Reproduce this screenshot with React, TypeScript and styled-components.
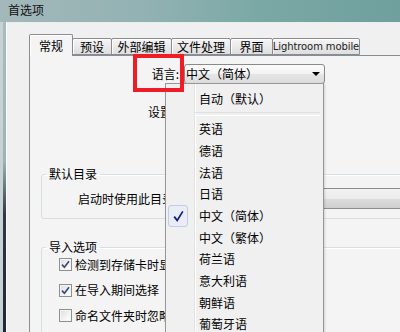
import React from "react";
import styled, { createGlobalStyle } from "styled-components";

const Global = createGlobalStyle`
  html, body { margin: 0; padding: 0; }
  body {
    width: 400px; height: 332px; overflow: hidden; background: #f0f0f0;
    font-family: "Noto Sans CJK SC", "Noto Sans", sans-serif;
    font-size: 12px; color: #000;
  }
  * { box-sizing: border-box; }
`;

const Window = styled.div`
  position: relative;
  width: 400px;
  height: 332px;
  overflow: hidden;
  display: flex;
  flex-direction: column;
  background: #f0f0f0;
`;

const TitleBar = styled.div`
  height: 22px;
  flex: none;
  padding: 2px 0 0 8px;
  background: linear-gradient(to right, #a3b8ba 0%, #93b2b3 35%, #7aa8a5 65%, #6fa09d 100%);
  font-size: 12px;
  line-height: 15px;
  color: #111;
`;

const Body = styled.div`
  flex: 1;
  display: flex;
  min-height: 0;
`;

const LeftFrame = styled.div`
  width: 6px;
  flex: none;
  background:
    linear-gradient(to right, #c8d2d4 0 3px, transparent 3px),
    linear-gradient(to bottom, #a6bdbd 0%, #9fb3b5 45%, #2c3a46 62%, #1d2935 100%);
`;

const Client = styled.div`
  flex: 1;
  min-width: 0;
  overflow: hidden;
  padding: 11px 0 0 22px;
  border-top: 1px solid #e9eef0;
  border-left: 1px solid #fbfbfb;
  display: flex;
  flex-direction: column;
`;

const TabStrip = styled.div`
  display: flex;
  align-items: flex-end;
  height: 21px;
  flex: none;
`;

const Tab = styled.div<{ $w: number; $active?: boolean }>`
  position: relative;
  width: ${(p) => p.$w}px;
  height: ${(p) => (p.$active ? 22 : 17)}px;
  margin-left: ${(p) => (p.$active ? 0 : -1)}px;
  margin-bottom: ${(p) => (p.$active ? -1 : 0)}px;
  z-index: ${(p) => (p.$active ? 2 : 1)};
  border: 1px solid #898c95;
  border-bottom: ${(p) => (p.$active ? "none" : "1px solid #898c95")};
  border-radius: 2px 2px 0 0;
  background: ${(p) =>
    p.$active ? "#f4f4f4" : "linear-gradient(#f5f5f5 0%, #ebebeb 45%, #dedede 100%)"};
  box-shadow: inset 1px 1px 0 #ffffff;
  display: flex;
  align-items: center;
  justify-content: center;
  font-size: 12px;
  line-height: 14px;
  padding-top: ${(p) => (p.$active ? 0 : 1)}px;
  white-space: nowrap;
`;

const LatinLabel = styled.span`
  font-family: "DejaVu Sans", "Noto Sans", sans-serif;
  font-size: 10px;
  letter-spacing: -0.1px;
  color: #222;
`;

const Panel = styled.div`
  width: 440px;
  flex: 1;
  border: 1px solid #898c95;
  background: #f4f4f4;
  display: flex;
  flex-direction: column;
`;

const LangRow = styled.div`
  display: grid;
  grid-template-columns: 154px 141px;
  align-items: center;
  margin-top: 8px;
`;

const FieldLabel = styled.div`
  text-align: right;
  padding-right: 5px;
  line-height: 16px;
`;

const Combo = styled.div`
  height: 20px;
  border: 1px solid #8a8a8a;
  border-radius: 3px;
  background: linear-gradient(#fbfbfb 0%, #f3f3f3 50%, #e6e6e6 51%, #dcdcdc 100%);
  display: flex;
  align-items: center;
  justify-content: space-between;
  padding: 0 4px 0 1px;
  line-height: 16px;
`;

const Arrow = styled.span`
  width: 0;
  height: 0;
  border-left: 4px solid transparent;
  border-right: 4px solid transparent;
  border-top: 4px solid #000;
`;

const SettingRow = styled.div`
  margin-top: 20px;
  padding-left: 118px;
  line-height: 16px;
`;

const Group = styled.fieldset<{ $top: number }>`
  margin: ${(p) => p.$top}px 0 0 11px;
  padding: 0;
  border: 1px solid #d5dfe5;
  border-radius: 3px;
  box-shadow: inset 0 1px 0 #ffffff;
`;

const Legend = styled.legend`
  margin-left: 4px;
  padding: 0 3px;
  line-height: 16px;
  font-size: 12px;
`;

const DirRow = styled.div`
  display: flex;
  align-items: center;
  gap: 90px;
  padding: 6px 0 9px 36px;
`;

const DirText = styled.span`
  line-height: 16px;
  white-space: nowrap;
`;

const ButtonBar = styled.div`
  width: 240px;
  height: 21px;
  border-top: 1px solid #8c8c8c;
  border-bottom: 1px solid #8c8c8c;
  background: linear-gradient(#f2f2f2 0%, #ebebeb 50%, #dddddd 50%, #cfcfcf 100%);
`;

const CheckList = styled.div`
  display: flex;
  flex-direction: column;
  margin-top: -3px;
  padding: 0 0 6px 17px;
`;

const CheckRow = styled.div`
  display: flex;
  align-items: center;
  gap: 3px;
  height: 25.5px;
  white-space: nowrap;
  line-height: 16px;
`;

const Box = styled.span`
  width: 13px;
  height: 13px;
  flex: none;
  border: 1px solid #8e8f8f;
  background: linear-gradient(135deg, #dcdcdc 0%, #f4f4f4 60%, #ffffff 100%);
  box-shadow: inset 0 0 0 1px #f4f4f4;
  display: flex;
  align-items: center;
  justify-content: center;
`;

const Menu = styled.div`
  position: absolute;
  left: 165px;
  top: 83px;
  width: 159px;
  height: 262px;
  z-index: 5;
  border: 1px solid #979797;
  background:
    linear-gradient(to right, transparent 28px, #e2e3e3 28px, #e2e3e3 29px, #ffffff 29px, #ffffff 30px, transparent 30px),
    #f0f0f0;
  padding-top: 4px;
  box-shadow: 1px 1px 2px rgba(0, 0, 0, 0.15);
`;

const MenuItem = styled.div`
  display: grid;
  grid-template-columns: 26px 1fr;
  column-gap: 5px;
  align-items: center;
  height: 21.7px;
  padding-left: 2px;
  line-height: 16px;
  white-space: nowrap;
`;

const MenuSep = styled.div`
  height: 8.6px;
  display: flex;
  align-items: center;
  padding: 0 3px 0 29px;
  &::after {
    content: "";
    flex: 1;
    height: 2px;
    border-top: 1px solid #e0e0e0;
    border-bottom: 1px solid #ffffff;
  }
`;

const CheckMark = styled.span`
  width: 20px;
  height: 22px;
  border: 1px solid #c3cbe6;
  border-radius: 3px;
  background: #e9edf8;
  display: flex;
  align-items: center;
  justify-content: center;
`;

const Highlight = styled.div`
  position: absolute;
  left: 133px;
  top: 54px;
  width: 51px;
  height: 38px;
  border: 4px solid #ee1c25;
  z-index: 6;
`;

const tabs = [
  { label: "常规", w: 44, active: true },
  { label: "预设", w: 40 },
  { label: "外部编辑", w: 61 },
  { label: "文件处理", w: 60 },
  { label: "界面", w: 43 },
  { label: "Lightroom mobile", w: 88, latin: true },
];

const languages = [
  "英语",
  "德语",
  "法语",
  "日语",
  "中文（简体）",
  "中文（繁体）",
  "荷兰语",
  "意大利语",
  "朝鲜语",
  "葡萄牙语",
];

const checks = [
  { text: "检测到存储卡时显示导入对话框", on: true },
  { text: "在导入期间选择“当前/上一次导入”收藏夹", on: true },
  { text: "命名文件夹时忽略由相机生成的文件夹名", on: false },
];

const SmallCheck = () => (
  <svg width="9" height="9" viewBox="0 0 9 9">
    <path d="M1 4.6 L3.4 7.2 L8 1.2" fill="none" stroke="#34477a" strokeWidth="1.6" />
  </svg>
);

const MenuCheck = () => (
  <svg width="11" height="12" viewBox="0 0 11 12">
    <path d="M1.2 6.6 L4.2 10.4 L9.8 1.4" fill="none" stroke="#12207a" strokeWidth="1.7" />
  </svg>
);

export default function App() {
  return (
    <Window>
      <Global />
      <TitleBar>首选项</TitleBar>
      <Body>
        <LeftFrame />
        <Client>
          <TabStrip>
            {tabs.map((t) => (
              <Tab key={t.label} $w={t.w} $active={t.active}>
                {t.latin ? <LatinLabel>{t.label}</LatinLabel> : t.label}
              </Tab>
            ))}
          </TabStrip>
          <Panel>
            <LangRow>
              <FieldLabel>语言:</FieldLabel>
              <Combo>
                <span>中文（简体）</span>
                <Arrow />
              </Combo>
            </LangRow>
            <SettingRow>设置:</SettingRow>
            <Group $top={46}>
              <Legend>默认目录</Legend>
              <DirRow>
                <DirText>启动时使用此目录</DirText>
                <ButtonBar />
              </DirRow>
            </Group>
            <Group $top={20}>
              <Legend>导入选项</Legend>
              <CheckList>
                {checks.map((c) => (
                  <CheckRow key={c.text}>
                    <Box>{c.on && <SmallCheck />}</Box>
                    <span>{c.text}</span>
                  </CheckRow>
                ))}
              </CheckList>
            </Group>
          </Panel>
        </Client>
      </Body>
      <Menu>
        <MenuItem>
          <span />
          <span>自动（默认）</span>
        </MenuItem>
        <MenuSep />
        {languages.map((l) => (
          <MenuItem key={l}>
            {l === "中文（简体）" ? (
              <CheckMark>
                <MenuCheck />
              </CheckMark>
            ) : (
              <span />
            )}
            <span>{l}</span>
          </MenuItem>
        ))}
      </Menu>
      <Highlight />
    </Window>
  );
}
